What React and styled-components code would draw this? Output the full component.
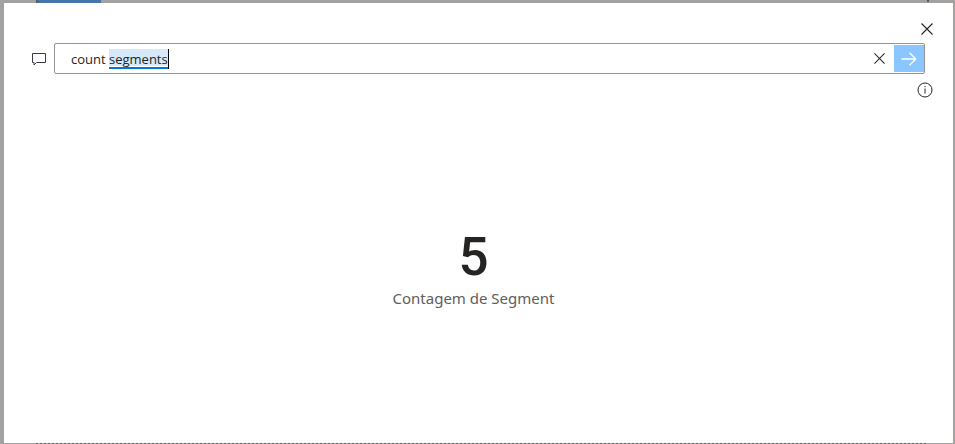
import React, { useState } from "react";
import styled, { createGlobalStyle } from "styled-components";

const GlobalStyle = createGlobalStyle`
  *, *::before, *::after { box-sizing: border-box; }
  body {
    margin: 0;
    background: #a3a2a1;
    font-family: "Open Sans", "Noto Sans", sans-serif;
    color: #252423;
  }
`;

const Page = styled.div`
  display: flex;
  flex-direction: column;
  min-height: 100vh;
  padding: 0 2px 0 4px;
`;

const TopEdge = styled.div`
  display: flex;
  justify-content: space-between;
  height: 3px;
  padding: 0 24px 0 32px;
`;

const ActiveTab = styled.div`
  width: 65px;
  height: 3px;
  background: #4475ab;
  border-left: 2px solid #605e5c;
`;

const Handle = styled.div`
  width: 2px;
  height: 2px;
  background: #605e5c;
`;

const BottomEdge = styled.div`
  height: 1px;
  margin: 0 25px 0 32px;
  background: repeating-linear-gradient(to right, #605e5c 0 2px, #b3b1b0 2px 4px);
`;

const Dialog = styled.main`
  flex: 1;
  display: flex;
  flex-direction: column;
  background: #ffffff;
`;

const IconButton = styled.button`
  display: flex;
  align-items: center;
  justify-content: center;
  width: ${(p) => p.$size}px;
  height: ${(p) => p.$size}px;
  padding: 0;
  border: 0;
  background: transparent;
  color: #252423;
  cursor: pointer;
`;

const SubmitButton = styled(IconButton)`
  width: 30px;
  height: 27px;
  background: #8ac6ff;
  color: #ffffff;
`;

const Header = styled.header`
  display: flex;
  justify-content: flex-end;
  padding: 16px 16px 4px;
`;

const QueryRow = styled.form`
  display: flex;
  align-items: center;
  gap: 7px;
  padding: 0 28px 0 27px;
`;

const QueryBox = styled.div`
  flex: 1;
  display: flex;
  align-items: center;
  height: 31px;
  padding-left: 16px;
  border: 1px solid #979593;
  border-radius: 2px;
`;

const Field = styled.div`
  position: relative;
  flex: 1;
  height: 20px;
  font-size: 13px;
  line-height: 20px;
`;

const QueryInput = styled.input`
  position: relative;
  display: block;
  width: 100%;
  height: 20px;
  padding: 0;
  border: 0;
  outline: 0;
  background: transparent;
  color: #252423;
  font: inherit;
`;

const HighlightLayer = styled.div`
  position: absolute;
  top: 0;
  left: 0;
  white-space: pre;
  color: transparent;
  user-select: none;
`;

const Term = styled.span`
  display: inline-block;
  height: 20px;
  background: linear-gradient(#d6e9f8 0 17px, #ffffff 17px 18px, #0078d4 18px 20px);
  border-right: 1px solid #000000;
`;

const InfoRow = styled.div`
  display: flex;
  justify-content: flex-end;
  padding: 6px 18px 0 0;
`;

const Result = styled.section`
  flex: 1;
  display: flex;
  flex-direction: column;
  align-items: center;
  justify-content: center;
  padding: 0 10px 4px 0;
`;

const Value = styled.div`
  font-family: Roboto, sans-serif;
  font-size: 53px;
  font-weight: 500;
  line-height: 56px;
`;

const Caption = styled.div`
  font-family: "Noto Sans", sans-serif;
  font-size: 15px;
  line-height: 26px;
  color: #605e5c;
`;

function Cross({ size }) {
  return (
    <svg width={size} height={size} viewBox="0 0 12 12" fill="none" stroke="currentColor" strokeWidth="1.1" aria-hidden="true">
      <path d="M.5.5l11 11M11.5.5l-11 11" />
    </svg>
  );
}

function Bubble() {
  return (
    <svg width="16" height="16" viewBox="0 0 16 16" fill="none" stroke="#3b3a4c" aria-hidden="true">
      <path d="M1.500 2.500h13v9h-9l-2.500 2.500v-2.500h-1.500z" />
    </svg>
  );
}

function Arrow() {
  return (
    <svg width="16" height="16" viewBox="0 0 16 16" fill="none" stroke="currentColor" strokeWidth="1.3" aria-hidden="true">
      <path d="M.5 8h14M8.500 1.700L14.800 8l-6.300 6.300" />
    </svg>
  );
}

function Info() {
  return (
    <svg width="16" height="16" viewBox="0 0 16 16" fill="none" stroke="currentColor" aria-hidden="true">
      <circle cx="8" cy="8" r="7" />
      <path d="M8 6.500v5M8 4v1.200" />
    </svg>
  );
}

export default function App() {
  const [query, setQuery] = useState("count segments");
  const term = "segments";
  const at = query.indexOf(term);

  return (
    <>
      <GlobalStyle />
      <Page>
        <TopEdge>
          <ActiveTab />
          <Handle />
        </TopEdge>
        <Dialog>
          <Header>
            <IconButton type="button" aria-label="Fechar" $size={20}>
              <Cross size={12} />
            </IconButton>
          </Header>
          <QueryRow onSubmit={(e) => e.preventDefault()}>
            <Bubble />
            <QueryBox>
              <Field>
                {at >= 0 && (
                  <HighlightLayer aria-hidden="true">
                    {query.slice(0, at)}
                    <Term>{term}</Term>
                  </HighlightLayer>
                )}
                <QueryInput
                  type="text"
                  aria-label="Pergunta"
                  spellCheck={false}
                  value={query}
                  onChange={(e) => setQuery(e.target.value)}
                />
              </Field>
              <IconButton type="button" aria-label="Limpar" $size={29} onClick={() => setQuery("")}>
                <Cross size={11} />
              </IconButton>
              <SubmitButton type="submit" aria-label="Enviar">
                <Arrow />
              </SubmitButton>
            </QueryBox>
          </QueryRow>
          <InfoRow>
            <IconButton type="button" aria-label="Informações" $size={20}>
              <Info />
            </IconButton>
          </InfoRow>
          <Result>
            <Value>5</Value>
            <Caption>Contagem de Segment</Caption>
          </Result>
        </Dialog>
        <BottomEdge />
      </Page>
    </>
  );
}
